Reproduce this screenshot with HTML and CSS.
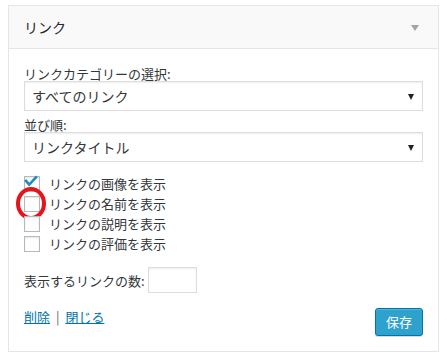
FILE: index.html
```html
<!DOCTYPE html>
<html lang="ja">
<head>
    <meta charset="UTF-8">
    <meta name="viewport" content="width=device-width, initial-scale=1.0">
    <title>リンク ウィジェット</title>
    <link rel="stylesheet" href="styles.css">
</head>
<body>
    <div class="widget">
        <div class="widget-top">
            <h3>リンク</h3>
            <span class="toggle-arrow"></span>
        </div>
        <div class="widget-inside">
            <p class="field">
                <label for="cat">リンクカテゴリーの選択:</label>
                <span class="select-wrap">
                    <select id="cat">
                        <option>すべてのリンク</option>
                    </select>
                </span>
            </p>
            <p class="field">
                <label for="orderby">並び順:</label>
                <span class="select-wrap">
                    <select id="orderby">
                        <option>リンクタイトル</option>
                    </select>
                </span>
            </p>
            <div class="checks">
                <label class="check-row">
                    <span class="checkbox checked">
                        <svg viewBox="0 0 20 20" width="20" height="20"><path d="M3 7.8 L6.2 11.6 L13 4.4" fill="none" stroke="#1e8cbe" stroke-width="2.6" stroke-linecap="square"/></svg>
                    </span>
                    リンクの画像を表示
                </label>
                <label class="check-row">
                    <span class="checkbox"></span>
                    リンクの名前を表示
                    <span class="marker"></span>
                </label>
                <label class="check-row">
                    <span class="checkbox"></span>
                    リンクの説明を表示
                </label>
                <label class="check-row">
                    <span class="checkbox"></span>
                    リンクの評価を表示
                </label>
            </div>
            <p class="number-row">
                <label for="limit">表示するリンクの数:</label>
                <input type="text" id="limit" class="small-input">
            </p>
            <div class="actions">
                <div class="action-links">
                    <a href="#">削除</a> <span class="sep">|</span> <a href="#">閉じる</a>
                </div>
                <button class="button-primary">保存</button>
            </div>
        </div>
    </div>
</body>
</html>
```

FILE: styles.css
```css
* {
    margin: 0;
    padding: 0;
    box-sizing: border-box;
}
body {
    font-family: "Noto Sans CJK JP", "Noto Sans", sans-serif;
    font-size: 13px;
    color: #32373c;
    background: #fff;
    padding: 5px 8px;
}
.widget {
    width: 431px;
    border: 1px solid #e5e5e5;
    background: #fff;
}
.widget-top {
    height: 43px;
    background: #f9f9f9;
    border-bottom: 1px solid #e5e5e5;
    display: flex;
    align-items: center;
    justify-content: space-between;
    padding: 0 19px 0 15px;
}
.widget-top h3 {
    font-size: 14px;
    font-weight: normal;
    color: #23282d;
    line-height: 20px;
}
.toggle-arrow {
    width: 0;
    height: 0;
    border-left: 4px solid transparent;
    border-right: 4px solid transparent;
    border-top: 6px solid #a0a5aa;
    margin-top: 2px;
}
.widget-inside {
    padding: 18px 15px 15px;
}
.field label {
    display: block;
    line-height: 14px;
}
.field + .field {
    margin-top: 7px;
}
.select-wrap {
    display: block;
    position: relative;
}
.select-wrap::after {
    content: "";
    position: absolute;
    right: 9px;
    top: 13px;
    border-left: 3.5px solid transparent;
    border-right: 3.5px solid transparent;
    border-top: 6px solid #222;
    pointer-events: none;
}
.select-wrap select {
    appearance: none;
    -webkit-appearance: none;
    width: 100%;
    height: 30px;
    border: 1px solid #ddd;
    border-radius: 0;
    box-shadow: inset 0 1px 2px rgba(0, 0, 0, 0.07);
    background: #fff;
    font-family: inherit;
    font-size: 14px;
    color: #32373c;
    padding: 0 7px;
    line-height: 28px;
}
.checks {
    margin-top: 12px;
}
.check-row {
    display: flex;
    align-items: center;
    height: 20px;
    line-height: 20px;
    position: relative;
}
.checkbox {
    width: 16px;
    height: 16px;
    border: 1px solid #b4b9be;
    background: #fff;
    box-shadow: inset 0 1px 2px rgba(0, 0, 0, 0.1);
    margin-right: 9px;
    position: relative;
    flex-shrink: 0;
}
.checkbox svg {
    position: absolute;
    left: -2px;
    top: -4px;
}
.marker {
    position: absolute;
    left: -8px;
    top: -7px;
    width: 30px;
    height: 33px;
    border: 4px solid #e8141b;
    border-radius: 50%;
}
.number-row {
    display: flex;
    align-items: center;
    margin-top: 13px;
}
.small-input {
    width: 49px;
    height: 26px;
    margin-left: 3px;
    border: 1px solid #ddd;
    box-shadow: inset 0 1px 2px rgba(0, 0, 0, 0.07);
    font-family: inherit;
}
.actions {
    display: flex;
    justify-content: space-between;
    align-items: flex-start;
    margin-top: 15px;
}
.action-links {
    line-height: 18px;
}
.action-links a {
    color: #0073aa;
    text-decoration: underline;
}
.sep {
    color: #666;
    margin: 0 3px;
}
.button-primary {
    height: 28px;
    padding: 0 10px;
    background: #2ea2cc;
    border: 1px solid #0074a2;
    border-radius: 3px;
    box-shadow: inset 0 1px 0 rgba(120, 200, 230, 0.5), 0 1px 0 rgba(0, 0, 0, 0.15);
    color: #fff;
    font-family: inherit;
    font-size: 13px;
    line-height: 26px;
    cursor: pointer;
}
```
